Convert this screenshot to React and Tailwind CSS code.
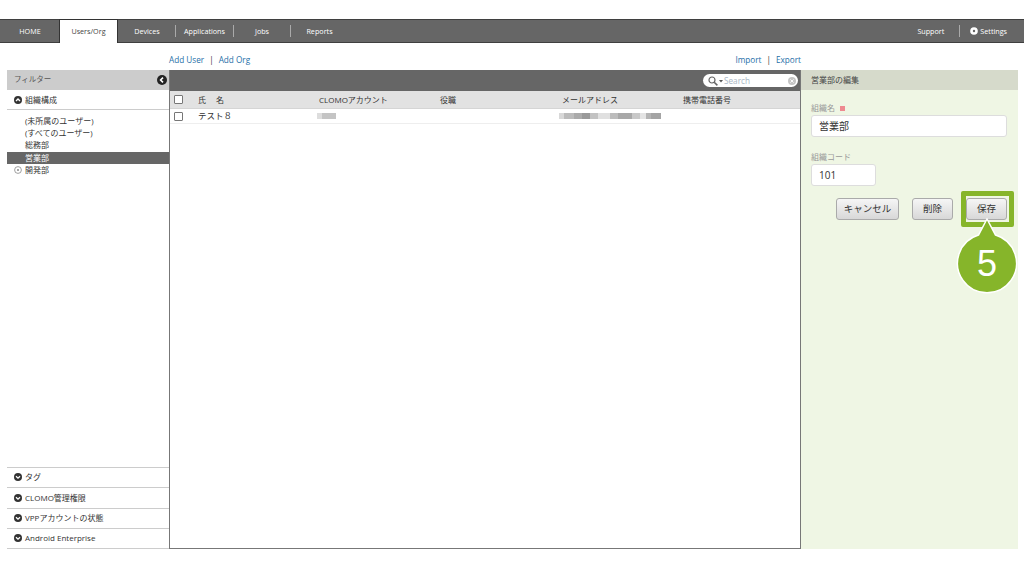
function Chevron({ up = false }) {
  return (
    <svg width="8" height="8" viewBox="0 0 8 8" className="shrink-0">
      <circle cx="4" cy="4" r="4" fill="#333" />
      <path d={up ? "M2 5 L4 3 L6 5" : "M2 3.2 L4 5.2 L6 3.2"} fill="none" stroke="#fff" strokeWidth="1.3" />
    </svg>
  );
}

function NavItem({ children, active, sep, w }) {
  return (
    <div className={`flex items-center ${w}`}>
      {active ? (
        <div className="w-full h-[24px] mt-[-1px] bg-white border-t border-l border-r border-[#333] flex items-center justify-center text-[#444]">{children}</div>
      ) : (
        <div className="w-full flex items-center justify-center text-white">{children}</div>
      )}
      {sep && <div className="w-px h-[12px] bg-[#aaa] shrink-0" />}
    </div>
  );
}

function Accordion({ label }) {
  return (
    <div className="h-[20.5px] border-t border-[#ccc] last:border-b flex items-center pl-[7px] gap-[3px] text-[8px] text-[#333]">
      <Chevron />
      <span>{label}</span>
    </div>
  );
}

function Btn({ children, className = "" }) {
  return (
    <button className={`h-[22px] rounded-[3px] border border-[#aaa] bg-gradient-to-b from-[#f6f6f6] to-[#d8d8d8] text-[9.5px] text-[#333] flex items-center justify-center ${className}`}>
      {children}
    </button>
  );
}

function Check() {
  return <div className="w-[9px] h-[9px] border border-[#777] rounded-[1px] bg-white shrink-0" />;
}

const emailBlur = [
  ["w-[5px]", "bg-[#d8d8d8]"], ["w-[10px]", "bg-[#bbb]"], ["w-[8px]", "bg-[#aaa]"], ["w-[8px]", "bg-[#999]"],
  ["w-[8px]", "bg-[#c2c2c2]"], ["w-[12px]", "bg-[#e0e0e0]"], ["w-[8px]", "bg-[#bcbcbc]"], ["w-[14px]", "bg-[#a8a8a8]"],
  ["w-[8px]", "bg-[#c8c8c8]"], ["w-[6px]", "bg-[#e4e4e4]"], ["w-[5px]", "bg-[#b4b4b4]"], ["w-[10px]", "bg-[#a4a4a4]"],
];

export default function App() {
  return (
    <div className="w-[1024px] h-[576px] bg-white overflow-hidden relative" style={{ fontFamily: '"Open Sans","Noto Sans CJK JP",sans-serif' }}>
      <div className="pt-[19px]">
        <div className="h-[24px] bg-[#666] border-t border-b border-[#3f3f3f] flex items-center text-[7.2px]">
          <NavItem w="w-[59px] pl-[1px]">HOME</NavItem>
          <NavItem w="w-[59px]" active>Users/Org</NavItem>
          <NavItem w="w-[58px] pl-[1px]" sep>Devices</NavItem>
          <NavItem w="w-[58px]" sep>Applications</NavItem>
          <NavItem w="w-[57px]" sep>Jobs</NavItem>
          <NavItem w="w-[57px]">Reports</NavItem>
          <div className="ml-auto flex items-center text-white pr-[17px]">
            <span>Support</span>
            <div className="w-px h-[12px] bg-[#aaa] ml-[15px] mr-[10px]" />
            <svg width="8" height="8" viewBox="0 0 8 8" className="mr-[2px]"><circle cx="4" cy="4" r="3.8" fill="#fff" /><circle cx="4" cy="4" r="1.2" fill="#666" /></svg>
            <span>Settings</span>
          </div>
        </div>
      </div>

      <div className="h-[27px] flex items-center text-[8.2px] text-[#1f6fa8] pl-[169px] pr-[223px] pt-[8px]">
        <span>Add User</span>
        <span className="mx-[5px] text-[#333]">|</span>
        <span>Add Org</span>
        <span className="ml-auto">Import</span>
        <span className="mx-[5px] text-[#333]">|</span>
        <span>Export</span>
      </div>

      <div className="flex mx-[7px] w-[1011px] h-[479px]">
        <aside className="w-[162px] flex flex-col pb-[0.5px]">
          <div className="h-[20px] bg-[#ccc] flex items-center justify-between pl-[7px] pr-[2px] text-[7.5px] text-[#555]">
            <span>フィルター</span>
            <svg width="10" height="10" viewBox="0 0 10 10"><circle cx="5" cy="5" r="5" fill="#222" /><path d="M6 2.6 L3.6 5 L6 7.4" fill="none" stroke="#fff" strokeWidth="1.6" /></svg>
          </div>
          <div className="h-[20px] flex items-center pl-[7px] gap-[3px] text-[8px] text-[#333] border-b border-[#ccc]">
            <Chevron up />
            <span>組織構成</span>
          </div>
          <div className="flex-1 pt-[4.5px] text-[8px] text-[#333] leading-[12.4px]">
            <div className="pl-[18px]">(未所属のユーザー)</div>
            <div className="pl-[18px]">(すべてのユーザー)</div>
            <div className="pl-[18px]">総務部</div>
            <div className="pl-[18px] bg-[#666] text-white">営業部</div>
            <div className="pl-[7px] flex items-center gap-[3px]">
              <svg width="8" height="8" viewBox="0 0 8 8"><circle cx="4" cy="4" r="3.4" fill="none" stroke="#888" strokeWidth="0.8" /><circle cx="4" cy="4" r="1" fill="#888" /></svg>
              <span>開発部</span>
            </div>
          </div>
          <div>
            <Accordion label="タグ" />
            <Accordion label="CLOMO管理権限" />
            <Accordion label="VPPアカウントの状態" />
            <Accordion label="Android Enterprise" />
          </div>
        </aside>

        <main className="w-[632px] flex flex-col border-l border-r border-b border-[#777]">
          <div className="h-[21px] bg-[#666] flex items-center justify-end pr-[2px] shrink-0">
            <div className="w-[95px] h-[13px] bg-white rounded-full flex items-center pl-[5px] pr-[2px] text-[8.2px] text-[#a9b6c4]">
              <svg width="10" height="10" viewBox="0 0 10 10" className="shrink-0"><circle cx="4" cy="4" r="3" fill="none" stroke="#666" strokeWidth="1.2" /><path d="M6.2 6.2 L9.4 9.4" stroke="#666" strokeWidth="1.5" /></svg>
              <svg width="4" height="4" viewBox="0 0 4 4" className="mx-[1px] shrink-0"><path d="M0 1 H4 L2 3.5Z" fill="#555" /></svg>
              <span className="pt-[1px]">Search</span>
              <svg width="8" height="8" viewBox="0 0 8 8" className="ml-auto"><circle cx="4" cy="4" r="4" fill="#c4c4c4" /><path d="M2.4 2.4 L5.6 5.6 M5.6 2.4 L2.4 5.6" stroke="#fff" strokeWidth="0.9" /></svg>
            </div>
          </div>
          <div className="h-[18px] bg-[#e2e2e2] border-b border-[#d5d5d5] flex items-center text-[8px] text-[#333] shrink-0">
            <div className="w-[28px] pl-[4px]"><Check /></div>
            <div className="w-[121px] whitespace-pre">氏　 名</div>
            <div className="w-[121px]">CLOMOアカウント</div>
            <div className="w-[122px]">役職</div>
            <div className="w-[121px]">メールアドレス</div>
            <div>携帯電話番号</div>
          </div>
          <div className="h-[15px] border-b border-[#eee] flex items-center text-[8.5px] text-[#333] shrink-0">
            <div className="w-[28px] pl-[4px]"><Check /></div>
            <div className="w-[121px]">テスト８</div>
            <div className="w-[121px]"><div className="w-[19px] h-[6px] -ml-[2px] flex"><div className="w-[5px] bg-[#ddd]" /><div className="flex-1 bg-[#c4c4c4]" /></div></div>
            <div className="w-[122px]" />
            <div className="h-[6px] -ml-[3px] flex">
              {emailBlur.map(([w, c], i) => <div key={i} className={`${w} ${c}`} />)}
            </div>
          </div>
          <div className="flex-1" />
        </main>

        <section className="w-[217px] bg-[#eff6e4] flex flex-col">
          <div className="h-[20px] bg-[#d6dacb] flex items-center pl-[10px] text-[8px] text-[#444] shrink-0">営業部の編集</div>
          <div className="pl-[10px] pr-[11px] pt-[12px]">
            <div className="text-[8px] text-[#999] h-[12px] flex items-center gap-[5px]">
              <span>組織名</span><span className="w-[5px] h-[5px] bg-[#ee8a90]" />
            </div>
            <div className="h-[22px] w-[196px] mt-[1px] bg-white border border-[#ddd] rounded-[3px] flex items-center pl-[7px] text-[10px] text-[#333]">営業部</div>
            <div className="text-[8px] text-[#999] h-[12px] mt-[14px] flex items-center">組織コード</div>
            <div className="h-[22px] w-[65px] mt-[1px] bg-white border border-[#ddd] rounded-[3px] flex items-center pl-[7px] text-[10px] text-[#333]">101</div>
            <div className="flex mt-[12px] pl-[25px]">
              <Btn className="w-[63px]">キャンセル</Btn>
              <Btn className="w-[41px] ml-[13px]">削除</Btn>
              <Btn className="w-[41px] ml-[13px]">保存</Btn>
            </div>
          </div>
        </section>
      </div>

      {/* callout */}
      <div className="absolute left-[961px] top-[191px] w-[53px] h-[36px] border-[5px] border-[#86b52a] rounded-[2px]" />
      <svg className="absolute left-[955px] top-[217px]" width="64" height="80" viewBox="0 0 64 80">
        <path d="M32 2 L40.5 18 A29.5 29.5 0 1 1 23.5 18 Z" fill="#86b52a" stroke="#fff" strokeWidth="1.5" />
      </svg>
      <div className="absolute left-[955px] top-[240px] w-[64px] h-[48px] flex items-center justify-center text-white text-[36px] leading-none" style={{ fontFamily: '"Liberation Sans",sans-serif' }}>5</div>
    </div>
  );
}
